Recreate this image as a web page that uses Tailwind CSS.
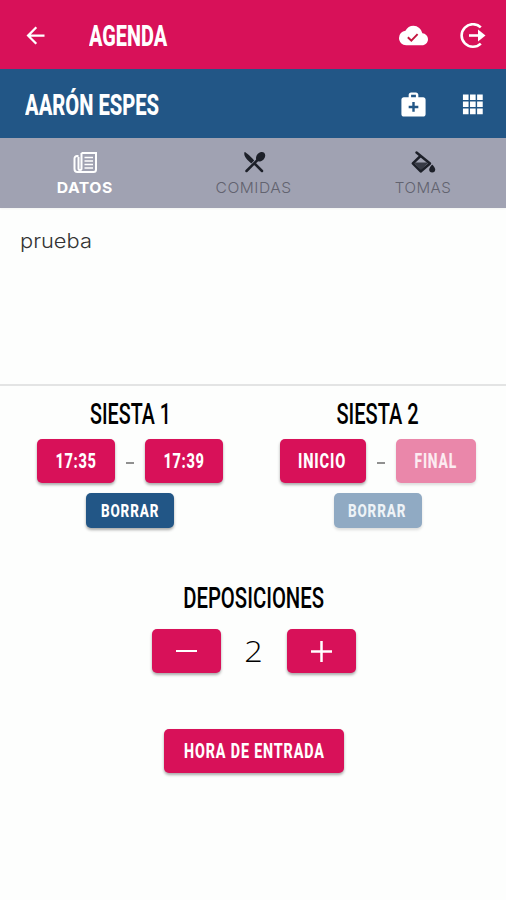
<!DOCTYPE html>
<html lang="es">
<head>
  <meta charset="UTF-8">
  <meta name="viewport" content="width=device-width, initial-scale=1.0">
  <title>Agenda</title>
  <script src="https://cdn.jsdelivr.net/npm/@tailwindcss/browser@4"></script>
</head>
<body class="h-[900px] overflow-hidden bg-[#fdfefd] font-['Roboto',sans-serif] text-black">
  <header class="flex h-[69px] items-center bg-[#d81159] pt-[2px] text-white">
    <svg class="ml-[22px] size-[27px]" viewBox="0 0 24 24" fill="currentColor"><path d="M20 11H7.83l5.59-5.59L12 4l-8 8 8 8 1.41-1.41L7.83 13H20v-2z"/></svg>
    <h1 class="ml-[40px] w-[79px] pt-[1px] whitespace-nowrap text-[29px] leading-none font-extrabold"><span class="inline-block origin-left scale-x-[.686]">AGENDA</span></h1>
    <svg class="ml-auto size-[29px]" viewBox="0 0 24 24" fill="currentColor"><path d="M19.35 10.04A7.49 7.49 0 0 0 12 4C9.11 4 6.6 5.64 5.35 8.04A5.994 5.994 0 0 0 0 14c0 3.31 2.69 6 6 6h13c2.76 0 5-2.24 5-5 0-2.64-2.05-4.78-4.65-4.96z"/><path d="M7.3 13.4l2.9 2.9 5.200-5.500" fill="none" stroke="#c4143f" stroke-width="1.600"/></svg>
    <svg class="mr-[20px] ml-[32px] size-[26px]" viewBox="0 0 26 26" fill="none" stroke="currentColor" stroke-width="2.6"><path d="M20.8 4.4A11.3 11.3 0 1 0 20.8 20.6"/><path d="M9 12.500h13"/><path d="M18 6.500l7.500 6-7.500 6z" fill="currentColor" stroke="none"/></svg>
  </header>

  <div class="flex h-[69px] items-center bg-[#225686] pt-[1px] text-white">
    <h2 class="ml-[25px] w-[134px] pt-[2px] whitespace-nowrap text-[29px] leading-none font-extrabold"><span class="inline-block origin-left scale-x-[.695]">AARÓN ESPES</span></h2>
    <svg class="ml-auto size-[29px]" viewBox="0 0 24 24" fill="currentColor"><path d="M20 6h-4V4c0-1.100-.9-2-2-2h-4c-1.100 0-2 .9-2 2v2H4c-1.100 0-2 .9-2 2v12c0 1.100.9 2 2 2h16c1.100 0 2-.9 2-2V8c0-1.100-.9-2-2-2zM10 4h4v2h-4V4zm6 11h-3v3h-2v-3H8v-2h3v-3h2v3h3v2z"/></svg>
    <svg class="mr-[20px] ml-[31px] size-[27px]" viewBox="0 0 24 24" fill="currentColor"><path d="M3.500 3h5v5h-5zM9.800 3h5v5h-5zM16.100 3h5v5h-5zM3.500 9.300h5v5h-5zM9.800 9.300h5v5h-5zM16.100 9.300h5v5h-5zM3.500 15.600h5v5h-5zM9.800 15.600h5v5h-5zM16.100 15.600h5v5h-5z"/></svg>
  </div>

  <nav class="grid h-[70px] grid-cols-3 bg-[#a0a2b2] pt-[12px] font-['Inter',sans-serif] text-[15px] leading-none text-[#62636f] shadow-xs">
    <div class="flex flex-col items-center gap-[4px] pl-[1px] text-white">
      <svg class="size-[26px]" viewBox="0 0 26 26" fill="none" stroke="currentColor" stroke-width="2"><path d="M9.500 3H24v16.500a2.500 2.500 0 0 1-2.500 2.500H5.500A3 3 0 0 1 2.500 19V8.500A2.500 2.500 0 0 1 5 6h1.500"/><path d="M9.500 3v15.500a1.500 1.500 0 0 1-3 0V7"/><path d="M12.500 7.500H21M12.500 11H21M12.500 14.500H21M12.500 18H21" stroke-width="1.500"/></svg>
      <span class="scale-x-[1.050] font-bold tracking-[.5px]">DATOS</span>
    </div>
    <div class="flex flex-col items-center gap-[4px] pl-[2px]">
      <svg class="size-[26px] text-[#1d2029]" viewBox="0 0 26 26" fill="currentColor"><path d="M3.500 2C5.500 2.300 11.500 8.200 13.200 10.500L10.300 13.400C7 10.500 2 6.500 3.500 2z"/><ellipse cx="19.600" cy="6.800" rx="4" ry="5.300" transform="rotate(42 19.600 6.800)"/><path d="M17 9.500L5.500 21M13.500 13.500L21 21" fill="none" stroke="currentColor" stroke-width="2.500" stroke-linecap="round"/></svg>
      <span class="scale-x-[1.040] font-light tracking-[.5px]">COMIDAS</span>
    </div>
    <div class="flex flex-col items-center gap-[4px] pl-[2px]">
      <svg class="h-[26px] w-[26px] text-[#1d2029]" viewBox="0 0 26 26" fill="currentColor"><path d="M6.500 2.500L20 13.500 10.700 21.500 2.800 13.300 10.500 6" fill="none" stroke="currentColor" stroke-width="2.500" stroke-linejoin="round" stroke-linecap="round"/><path d="M4 12.500h14.500l-7.800 8z" fill-opacity=".8"/><path d="M22.200 14.500s-3 3-3 5a3 3 0 0 0 6 0c0-2-3-5-3-5z"/></svg>
      <span class="scale-x-[1.010] font-light tracking-[.5px]">TOMAS</span>
    </div>
  </nav>

  <div class="h-[178px] border-b-2 border-[#e3e4e4] px-[20px] pt-[21px] font-['Inter',sans-serif] text-[19.500px] leading-[24px] font-light text-[#333]">
    <span class="inline-block origin-left scale-x-[1.120]">prueba</span>
  </div>

  <section class="flex h-[189px] pt-[14px] text-[20px] leading-none font-extrabold text-white">
    <div class="flex w-[260px] flex-col items-center">
      <h3 class="text-[29px] font-medium text-black"><span class="inline-block scale-x-[.68]">SIESTA 1</span></h3>
      <div class="mt-[10px] flex items-center">
        <button class="flex h-[44px] w-[78px] items-center justify-center rounded-[5px] bg-[#d81159] pb-[1px] shadow-[0_2px_3px_#0005]"><span class="scale-x-[.73] tracking-[.8px]">17:35</span></button>
        <span class="mx-[11px] mt-[4px] h-[2px] w-[8px] bg-[#909090]"></span>
        <button class="flex h-[44px] w-[78px] items-center justify-center rounded-[5px] bg-[#d81159] pb-[1px] shadow-[0_2px_3px_#0005]"><span class="scale-x-[.73] tracking-[.8px]">17:39</span></button>
      </div>
      <button class="mt-[10px] flex h-[35px] w-[88px] items-center justify-center rounded-[5px] bg-[#225686] text-[19px] shadow-[0_2px_3px_#0005]"><span class="scale-x-[.71] tracking-[1.200px]">BORRAR</span></button>
    </div>
    <div class="flex w-[235px] flex-col items-center">
      <h3 class="text-[29px] font-medium text-black"><span class="inline-block scale-x-[.69]">SIESTA 2</span></h3>
      <div class="mt-[10px] flex items-center">
        <button class="flex h-[44px] w-[86px] items-center justify-center rounded-[5px] bg-[#d81159] pb-[1px] shadow-[0_2px_3px_#0005]"><span class="scale-x-[.73] tracking-[1.200px]">INICIO</span></button>
        <span class="mx-[11px] mt-[4px] h-[2px] w-[8px] bg-[#909090]"></span>
        <button class="flex h-[44px] w-[80px] items-center justify-center rounded-[5px] bg-[#ea87aa] pb-[1px] text-[#fcebf1] shadow-[0_2px_3px_#0002]"><span class="scale-x-[.69] tracking-[1.200px]">FINAL</span></button>
      </div>
      <button class="mt-[10px] flex h-[35px] w-[88px] items-center justify-center rounded-[5px] bg-[#90aac3] text-[19px] text-[#eef3f7] shadow-[0_2px_3px_#0002]"><span class="scale-x-[.71] tracking-[1.200px]">BORRAR</span></button>
    </div>
  </section>

  <section class="flex flex-col items-center pt-[9px] pl-[2px] text-[20px] leading-none font-extrabold text-white">
    <h3 class="text-[29px] font-medium text-black"><span class="inline-block scale-x-[.7]">DEPOSICIONES</span></h3>
    <div class="mt-[16px] flex items-center">
      <button class="flex h-[44px] w-[69px] items-center justify-center rounded-[5px] bg-[#d81159] shadow-[0_2px_3px_#0005]"><span class="h-[2px] w-[21px] bg-white"></span></button>
      <span class="w-[66px] text-center font-['Open_Sans',sans-serif] text-[30px] font-light text-black"><span class="inline-block scale-x-[1.080]">2</span></span>
      <button class="flex h-[44px] w-[69px] items-center justify-center rounded-[5px] bg-[#d81159] shadow-[0_2px_3px_#0005]"><svg class="size-[21px]" viewBox="0 0 21 21" stroke="currentColor" stroke-width="2.500"><path d="M0 10.500h21M10.500 0v21"/></svg></button>
    </div>
    <button class="mt-[56px] flex h-[44px] w-[180px] items-center justify-center rounded-[5px] bg-[#d81159] pb-[1px] shadow-[0_2px_3px_#0005]"><span class="scale-x-[.715] whitespace-nowrap tracking-[1.200px]">HORA DE ENTRADA</span></button>
  </section>
</body>
</html>
